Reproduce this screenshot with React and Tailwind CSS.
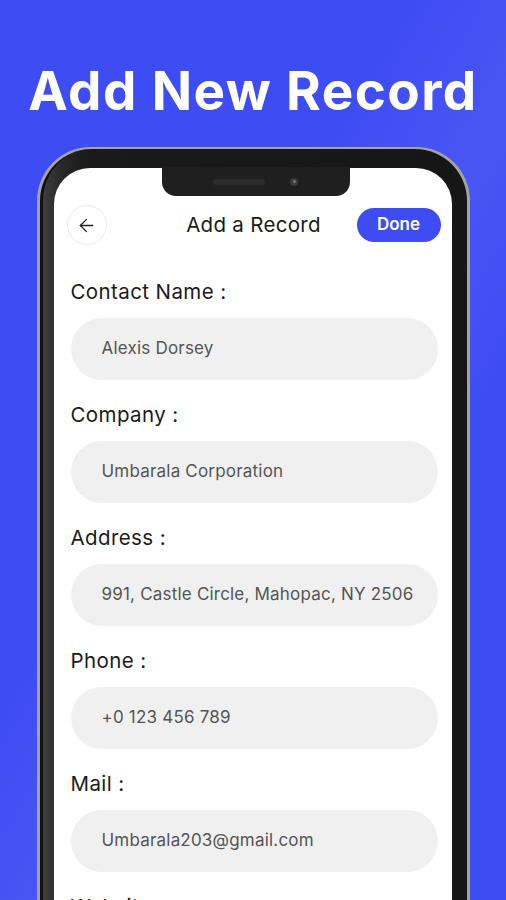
import { ArrowLeft } from 'lucide-react'

const fields = [
  { label: 'Contact Name :', value: 'Alexis Dorsey' },
  { label: 'Company :', value: 'Umbarala Corporation' },
  { label: 'Address :', value: '991, Castle Circle, Mahopac, NY 2506' },
  { label: 'Phone :', value: '+0 123 456 789' },
  { label: 'Mail :', value: 'Umbarala203@gmail.com' },
  { label: 'Website :', value: 'www.umbarala.com' },
]

function Field({ label, value }) {
  return (
    <div className="flex flex-col">
      <div className="h-[28px] leading-[28px] text-[20.5px] tracking-[0.4px] text-[#1b1b1b]">{label}</div>
      <div className="mt-[12px] h-[62px] rounded-full bg-[#f0f0f0] flex items-center pl-[31px] text-[17px] tracking-[0.2px] text-[#555] whitespace-nowrap overflow-hidden">
        {value}
      </div>
    </div>
  )
}

export default function App() {
  return (
    <div
      className="w-[506px] h-[900px] overflow-hidden relative flex flex-col items-center bg-[#3e4cf4]"
      style={{ fontFamily: 'Inter, "Open Sans", sans-serif' }}
    >
      <div className="absolute inset-0 bg-[linear-gradient(120deg,transparent_40%,rgba(255,255,255,0.06)_55%,transparent_70%)]" />
      <h1 className="relative mt-[58px] h-[66px] leading-[66px] text-[53px] font-bold text-white tracking-[1.4px]">
        Add New Record
      </h1>
      <div className="relative mt-[23px] w-[433px] flex-1 rounded-t-[54px] bg-[#a3a3a3] pt-[2px] px-[3px]">
        <div className="h-full rounded-t-[52px] bg-[linear-gradient(90deg,#3d3d3d_0%,#2a2a2a_4%,#1a1a1a_10%,#161616_100%)] pt-[19px] pl-[11px] pr-[15px] border-l-[3px] border-[#111]">
          <div className="relative h-full rounded-t-[36px] bg-white">
            <div className="absolute left-[108px] -top-[1px] w-[188px] h-[29px] rounded-b-[14px] bg-[#1f1f1f] flex items-center justify-center gap-[25px]">
              <div className="w-[52px] h-[6px] rounded-full bg-[#2c2c2c]" />
              <div className="w-[8px] h-[8px] rounded-full bg-[#3a3a3a] flex items-center justify-center">
                <div className="w-[3px] h-[3px] rounded-full bg-[#777]" />
              </div>
            </div>
            <div className="grid grid-cols-[1fr_auto_1fr] items-center pt-[37px] pl-[13px] pr-[11px]">
              <div className="w-[40px] h-[40px] rounded-full border border-[#ececec] flex items-center justify-center text-[#222]">
                <ArrowLeft size={21} strokeWidth={1.5} />
              </div>
              <div className="text-[20.5px] tracking-[0.3px] text-[#1b1b1b]">Add a Record</div>
              <div className="justify-self-end w-[84px] h-[34px] rounded-full bg-[#3e4cf4] flex items-center justify-center text-white text-[17px] font-semibold">
                Done
              </div>
            </div>
            <div className="mt-[33px] pl-[17px] pr-[14px] flex flex-col gap-[21px]">
              {fields.map((f) => (
                <Field key={f.label} label={f.label} value={f.value} />
              ))}
            </div>
          </div>
        </div>
      </div>
    </div>
  )
}
